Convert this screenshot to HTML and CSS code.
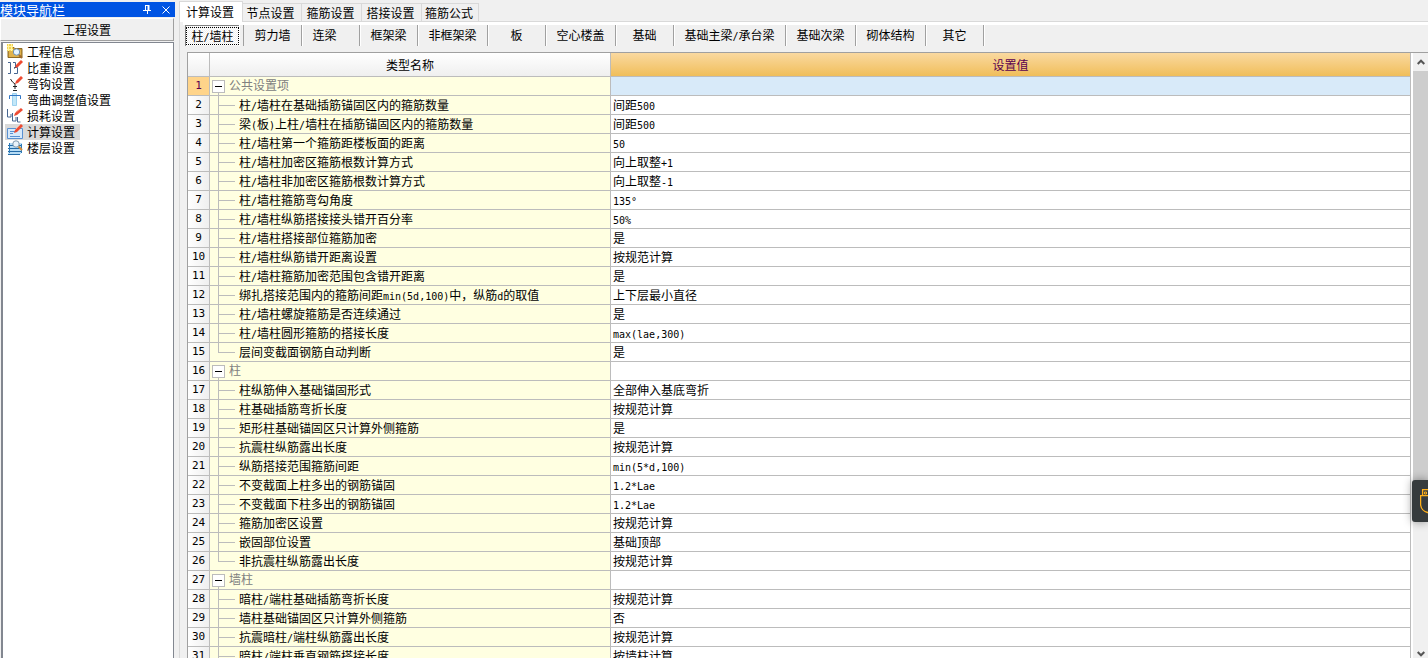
FILE: index.html
```html
<!DOCTYPE html>
<html lang="zh-CN">
<head>
<meta charset="utf-8">
<title>工程设置</title>
<link rel="stylesheet" href="styles.css">
</head>
<body>
<div class="app">
<aside class="side">
  <header class="side-title"><span class="side-name">模块导航栏</span>
    <button class="tool" aria-label="固定"><svg width="9" height="9" viewBox="0 0 9 9" fill="none" stroke="#fff"><path d="M2.5 0v5M2 .5h4M0 5.5h8M4.5 6v3"/><path d="M5.5 0v5" stroke-width="2"/></svg></button>
    <button class="tool" aria-label="关闭"><svg width="8" height="8" viewBox="0 0 8 8" stroke="#fff"><path d="M.5 .5l7 7M7.5 .5l-7 7"/></svg></button>
  </header>
  <button class="side-group">工程设置</button>
  <nav class="side-list">
    <button class="item"><svg width="16" height="16" viewBox="0 0 16 16"><path d="M1 3.500h6l1 1h7v9H1z" fill="#c99a35" stroke="#8d6a24"/><path d="M2 6h12v7H2z" fill="#e0b24c"/><path d="M0 0h6v7H0z" fill="#f3d24f"/><path d="M0 2.500h6M1.500 0v7M4.500 0v7M0 5.500h6" stroke="#fff3a0"/><path d="M12 11l3 3" stroke="#a06a2c" stroke-width="2"/><circle cx="9.500" cy="8" r="3.200" fill="#e4f4ff" stroke="#6e8fae"/></svg>工程信息</button>
    <button class="item"><svg width="16" height="16" viewBox="0 0 16 16" fill="none"><path d="M1 2.500h2.500v11H1M6 2.500h2.500v5H7M8 7.500h2.500v6H7" stroke="#46658f"/><path d="M8 8l1-3 5-5 2 2-5 5z" fill="#ed4a32"/><path d="M9.500 4.500l4-4" stroke="#ff9a80"/><path d="M7.500 8.500l1-1" stroke="#333"/></svg>比重设置</button>
    <button class="item"><svg width="16" height="16" viewBox="0 0 16 16" fill="none"><path d="M3.500 3l2 3 2.500 2v5M6 14.500h4M6 10.500h4" stroke="#222"/><path d="M8 8l1-3 5-5 2 2-5 5z" fill="#ed4a32"/><path d="M9.500 4.500l4-4" stroke="#ff9a80"/></svg>弯钩设置</button>
    <button class="item"><svg width="16" height="16" viewBox="0 0 16 16" fill="none"><path d="M5.500 1.500h4v12h-4z" fill="#c3e7f8" stroke="#9bd0ee"/><path d="M2.500 7V3.500h11V7" stroke="#3477c5"/></svg>弯曲调整值设置</button>
    <button class="item"><svg width="16" height="16" viewBox="0 0 16 16" fill="none"><path d="M.5 1v8H4V6M5.500 5v8H9V9M10.500 9v5h3" stroke="#46658f"/><path d="M7 8l1-3 6-5 2 2-6 5z" fill="#ed4a32"/><path d="M9 4l4-3" stroke="#ff9a80"/></svg>损耗设置</button>
    <button class="item current"><svg width="16" height="16" viewBox="0 0 16 16" fill="none"><path d="M.5 4.500h15v10H.5z" fill="#d7e9fb" stroke="#5a91d2"/><path d="M3 7.500h5M3 9.500h3M3 12.500h10" stroke="#5a91d2"/><path d="M7 9l1-3 6-6 2 2-6 6z" fill="#ed4a32"/><path d="M9 5l4-4" stroke="#ff9a80"/></svg>计算设置</button>
    <button class="item"><svg width="16" height="16" viewBox="0 0 16 16" fill="none"><path d="M3 3h12l-1 11H1z" fill="#b6dcf5"/><path d="M1 5.500h13M1 8.500h13M1 11.500h13M1 14.500h12" stroke="#236ba8"/><path d="M2.500 3v10M14.500 4v9" stroke="#2d7ab8"/><path d="M11 6l4 4" stroke="#d58b38" stroke-width="2"/><circle cx="9" cy="4" r="3.200" fill="#e9f3fa" stroke="#7f99ad"/></svg>楼层设置</button>
  </nav>
</aside>
<main class="main">
  <div class="tabs" role="tablist">
    <button class="tab active" role="tab" aria-selected="true">计算设置</button>
    <button class="tab" role="tab">节点设置</button>
    <button class="tab" role="tab">箍筋设置</button>
    <button class="tab" role="tab">搭接设置</button>
    <button class="tab" role="tab">箍筋公式</button>
  </div>
  <section class="page">
    <div class="kinds">
      <button class="kind pressed"><span class="focus">柱<span class="en">/</span>墙柱</span></button>
      <button class="kind first">剪力墙</button>
      <button class="kind left">连梁</button>
      <button class="kind">框架梁</button>
      <button class="kind wide">非框架梁</button>
      <button class="kind">板</button>
      <button class="kind wide">空心楼盖</button>
      <button class="kind">基础</button>
      <button class="kind widest">基础主梁<span class="en">/</span>承台梁</button>
      <button class="kind wide">基础次梁</button>
      <button class="kind wide">砌体结构</button>
      <button class="kind">其它</button>
    </div>
    <div class="grid">
      <div class="grid-view">
      <table class="sheet">
        <colgroup><col class="c-num"><col class="c-name"><col></colgroup>
        <thead><tr><th></th><th>类型名称</th><th class="hot">设置值</th></tr></thead>
        <tbody>
        <tr class="group sel"><th>1</th><td><button class="fold" aria-label="折叠"></button>公共设置项</td><td></td></tr>
        <tr><th>2</th><td>柱<span class="en">/</span>墙柱在基础插筋锚固区内的箍筋数量</td><td>间距<span class="en">500</span></td></tr>
        <tr><th>3</th><td>梁<span class="en">(</span>板<span class="en">)</span>上柱<span class="en">/</span>墙柱在插筋锚固区内的箍筋数量</td><td>间距<span class="en">500</span></td></tr>
        <tr><th>4</th><td>柱<span class="en">/</span>墙柱第一个箍筋距楼板面的距离</td><td><span class="en">50</span></td></tr>
        <tr><th>5</th><td>柱<span class="en">/</span>墙柱加密区箍筋根数计算方式</td><td>向上取整<span class="en">+1</span></td></tr>
        <tr><th>6</th><td>柱<span class="en">/</span>墙柱非加密区箍筋根数计算方式</td><td>向上取整<span class="en">-1</span></td></tr>
        <tr><th>7</th><td>柱<span class="en">/</span>墙柱箍筋弯勾角度</td><td><span class="en">135°</span></td></tr>
        <tr><th>8</th><td>柱<span class="en">/</span>墙柱纵筋搭接接头错开百分率</td><td><span class="en">50%</span></td></tr>
        <tr><th>9</th><td>柱<span class="en">/</span>墙柱搭接部位箍筋加密</td><td>是</td></tr>
        <tr><th>10</th><td>柱<span class="en">/</span>墙柱纵筋错开距离设置</td><td>按规范计算</td></tr>
        <tr><th>11</th><td>柱<span class="en">/</span>墙柱箍筋加密范围包含错开距离</td><td>是</td></tr>
        <tr><th>12</th><td>绑扎搭接范围内的箍筋间距<span class="en">min(5d,100)</span>中，纵筋<span class="en">d</span>的取值</td><td>上下层最小直径</td></tr>
        <tr><th>13</th><td>柱<span class="en">/</span>墙柱螺旋箍筋是否连续通过</td><td>是</td></tr>
        <tr><th>14</th><td>柱<span class="en">/</span>墙柱圆形箍筋的搭接长度</td><td><span class="en">max(lae,300)</span></td></tr>
        <tr class="last"><th>15</th><td>层间变截面钢筋自动判断</td><td>是</td></tr>
        <tr class="group"><th>16</th><td><button class="fold" aria-label="折叠"></button>柱</td><td></td></tr>
        <tr><th>17</th><td>柱纵筋伸入基础锚固形式</td><td>全部伸入基底弯折</td></tr>
        <tr><th>18</th><td>柱基础插筋弯折长度</td><td>按规范计算</td></tr>
        <tr><th>19</th><td>矩形柱基础锚固区只计算外侧箍筋</td><td>是</td></tr>
        <tr><th>20</th><td>抗震柱纵筋露出长度</td><td>按规范计算</td></tr>
        <tr><th>21</th><td>纵筋搭接范围箍筋间距</td><td><span class="en">min(5*d,100)</span></td></tr>
        <tr><th>22</th><td>不变截面上柱多出的钢筋锚固</td><td><span class="en">1.2*Lae</span></td></tr>
        <tr><th>23</th><td>不变截面下柱多出的钢筋锚固</td><td><span class="en">1.2*Lae</span></td></tr>
        <tr><th>24</th><td>箍筋加密区设置</td><td>按规范计算</td></tr>
        <tr><th>25</th><td>嵌固部位设置</td><td>基础顶部</td></tr>
        <tr class="last"><th>26</th><td>非抗震柱纵筋露出长度</td><td>按规范计算</td></tr>
        <tr class="group"><th>27</th><td><button class="fold" aria-label="折叠"></button>墙柱</td><td></td></tr>
        <tr><th>28</th><td>暗柱<span class="en">/</span>端柱基础插筋弯折长度</td><td>按规范计算</td></tr>
        <tr><th>29</th><td>墙柱基础锚固区只计算外侧箍筋</td><td>否</td></tr>
        <tr><th>30</th><td>抗震暗柱<span class="en">/</span>端柱纵筋露出长度</td><td>按规范计算</td></tr>
        <tr><th>31</th><td>暗柱<span class="en">/</span>端柱垂直钢筋搭接长度</td><td>按墙柱计算</td></tr>
        </tbody>
      </table>
      </div>
      <div class="scroll">
        <button class="arrow" aria-label="向上"><svg width="8" height="6" viewBox="0 0 8 6" fill="none" stroke="#555" stroke-width="2"><path d="M.7 5L4 1.700 7.300 5"/></svg></button>
        <div class="track"><div class="thumb"></div></div>
        <button class="arrow low" aria-label="向下"><svg width="8" height="6" viewBox="0 0 8 6" fill="none" stroke="#555" stroke-width="2"><path d="M.7 1L4 4.300 7.300 1"/></svg></button>
      </div>
    </div>
  </section>
</main>
</div>
<button class="usb" aria-label="设备"><svg width="8" height="26" viewBox="0 0 8 26" fill="none" stroke="#ffb01a" stroke-width="1.300"><path d="M2.600 7V1.600h8M.6 7.600h10M.6 7v10q1 6 7 7.500h3"/><path d="M4.500 4h2v2h-2z" stroke-width="1"/></svg></button>
</body>
</html>
```
FILE: styles.css
```css
* { box-sizing: border-box; }
body {
  margin: 0;
  background: #f0f0f0;
  color: #000;
  font: 12px/16px "Noto Sans CJK SC", sans-serif;
}
button {
  margin: 0;
  padding: 0;
  border: 0;
  background: none;
  color: inherit;
  font: inherit;
  white-space: nowrap;
}
svg { display: block; flex: none; }
.en { font-family: "DejaVu Sans Mono", monospace; font-size: 10px; line-height: 12px; }
.app { display: flex; height: 100vh; overflow: hidden; }

/* navigation panel */
.side { flex: none; width: 175px; padding-top: 2px; display: flex; flex-direction: column; }
.side-title {
  display: flex;
  align-items: center;
  gap: 10px;
  height: 15px;
  padding-right: 5px;
  background: #0054e3;
  color: #fff;
}
.side-name { flex: 1; font-size: 13px; }
.side-group {
  height: 23px;
  margin: 1px 1px 0 0;
  border: 1px solid #a0a0a0;
  border-top-color: #fff;
  border-left-color: #fff;
  background: #f0f0f0;
}
.side-list {
  flex: 1;
  display: flex;
  flex-direction: column;
  align-items: flex-start;
  margin: 1px 1px 0;
  padding: 1px 2px 0;
  border: 1px solid #828790;
  border-width: 1px 1px 0 2px;
  background: #fff;
}
.item { display: flex; align-items: center; gap: 4px; height: 16px; padding: 0 5px 0 2px; }
.current { background: #d9d9d9; }

/* tabs */
.main { flex: 1; min-width: 0; margin-left: 4px; display: flex; flex-direction: column; }
.tabs {
  display: flex;
  align-items: flex-end;
  height: 22px;
  background: linear-gradient(#d9d9d9, #d9d9d9) bottom / 100% 1px no-repeat;
}
.tab { width: 60px; height: 19px; border: 1px solid #d9d9d9; border-left: 0; }
.tab.active {
  align-self: stretch;
  width: 64px;
  height: auto;
  margin: 1px 0 0;
  padding-right: 2px;
  border-left: 1px solid #d9d9d9;
  border-bottom: 0;
  background: #fff;
}
.tab.active + .tab { width: 59px; padding-right: 3px; }
.tab + .tab + .tab { padding-right: 2px; }
.tab:last-child { width: 57px; }
.page {
  flex: 1;
  min-height: 0;
  display: flex;
  flex-direction: column;
  padding-left: 3px;
  border-left: 1px solid #d9d9d9;
  background: #f0f0f0;
}
.kinds { display: flex; height: 24px; border-top: 3px solid #fff; padding-left: 2px; }
.kind { width: 58px; padding-bottom: 2px; border-right: 1px solid #a0a0a0; box-shadow: 1px 0 #fff; }
.kind.left { padding-right: 12px; }
.kind.wide { width: 70px; }
.kind.widest { width: 112px; }
.kind.pressed {
  width: 54px;
  margin-right: 4px;
  border: 1px solid #808080;
  border-width: 1px 0 0 1px;
  padding: 0;
  background: repeating-conic-gradient(#fff 0 25%, #f0f0f0 0 50%) 0 0 / 2px 2px;
}
.kind.first { width: 59px; border-left: 1px solid #a0a0a0; }
.focus { display: block; border: 1px dotted #000; line-height: 16px; }

/* settings sheet */
.grid {
  flex: 1;
  min-height: 0;
  display: flex;
  margin: 6px 0 0 4px;
  border: 1px solid #a0a0a0;
  border-width: 1px 0 0 1px;
  background: #fff;
}
.grid-view { flex: 1; min-width: 0; overflow: hidden; }
.sheet { width: 100%; table-layout: fixed; border-collapse: separate; border-spacing: 0; }
.c-num { width: 22px; }
.c-name { width: 401px; }
.sheet th, .sheet td {
  height: 19px;
  padding: 0;
  border-right: 1px solid #bcbcbc;
  border-bottom: 1px solid #bcbcbc;
  font-weight: normal;
  line-height: 16px;
  white-space: nowrap;
}
.sheet thead th { height: 24px; background: linear-gradient(#fff, #efefef); }
.sheet thead .hot { background: linear-gradient(#fad9a0, #f0be5a); color: #5a0050; }
.sheet tbody th {
  background: linear-gradient(90deg, #fff, #efefef);
  font-family: "DejaVu Sans Mono", monospace;
  font-size: 11px;
  text-align: center;
}
.sheet td:nth-child(2) {
  padding-left: 29px;
  background:
    linear-gradient(#bcbcbc, #bcbcbc) 8px 0 / 1px 100% no-repeat,
    linear-gradient(#bcbcbc, #bcbcbc) 8px 9px / 17px 1px no-repeat,
    #ffffe1;
}
.sheet .last td:nth-child(2) {
  background:
    linear-gradient(#bcbcbc, #bcbcbc) 8px 0 / 1px 10px no-repeat,
    linear-gradient(#bcbcbc, #bcbcbc) 8px 9px / 17px 1px no-repeat,
    #ffffe1;
}
.sheet td:nth-child(3) { padding-left: 2px; }
.sheet .group td:nth-child(2) {
  padding-left: 2px;
  background: linear-gradient(#bcbcbc, #bcbcbc) 8px 12px / 1px 8px no-repeat, #ffffe1;
  color: #808080;
}
.sheet tbody.sheet .sel th, .sheet .sel th { background: #ffd48a; color: #5a0050; }
.sheet .sel td:nth-child(3) { background: #d8eaf9; }
.fold {
  width: 13px;
  height: 13px;
  margin: 0 4px 2px 0;
  border: 1px solid #bcbcbc;
  vertical-align: middle;
  background: linear-gradient(#000, #000) center / 7px 1px no-repeat, #fff;
}

/* scroll bar */
.scroll { flex: none; width: 15px; margin-left: 2px; display: flex; flex-direction: column; background: #f0f0f0; }
.arrow { height: 18px; display: flex; align-items: center; justify-content: center; }
.arrow.low { height: 9px; }
.track { flex: 1; }
.thumb { height: 74%; background: #cdcdcd; }

/* docked device handle */
.usb {
  position: fixed;
  top: 480px;
  right: 0;
  width: 16px;
  height: 42px;
  display: flex;
  align-items: center;
  justify-content: flex-end;
  overflow: hidden;
  border-radius: 3px 0 0 3px;
  background: #363b3d;
  box-shadow: 0 0 10px rgba(0, 0, 0, .4);
}
```
